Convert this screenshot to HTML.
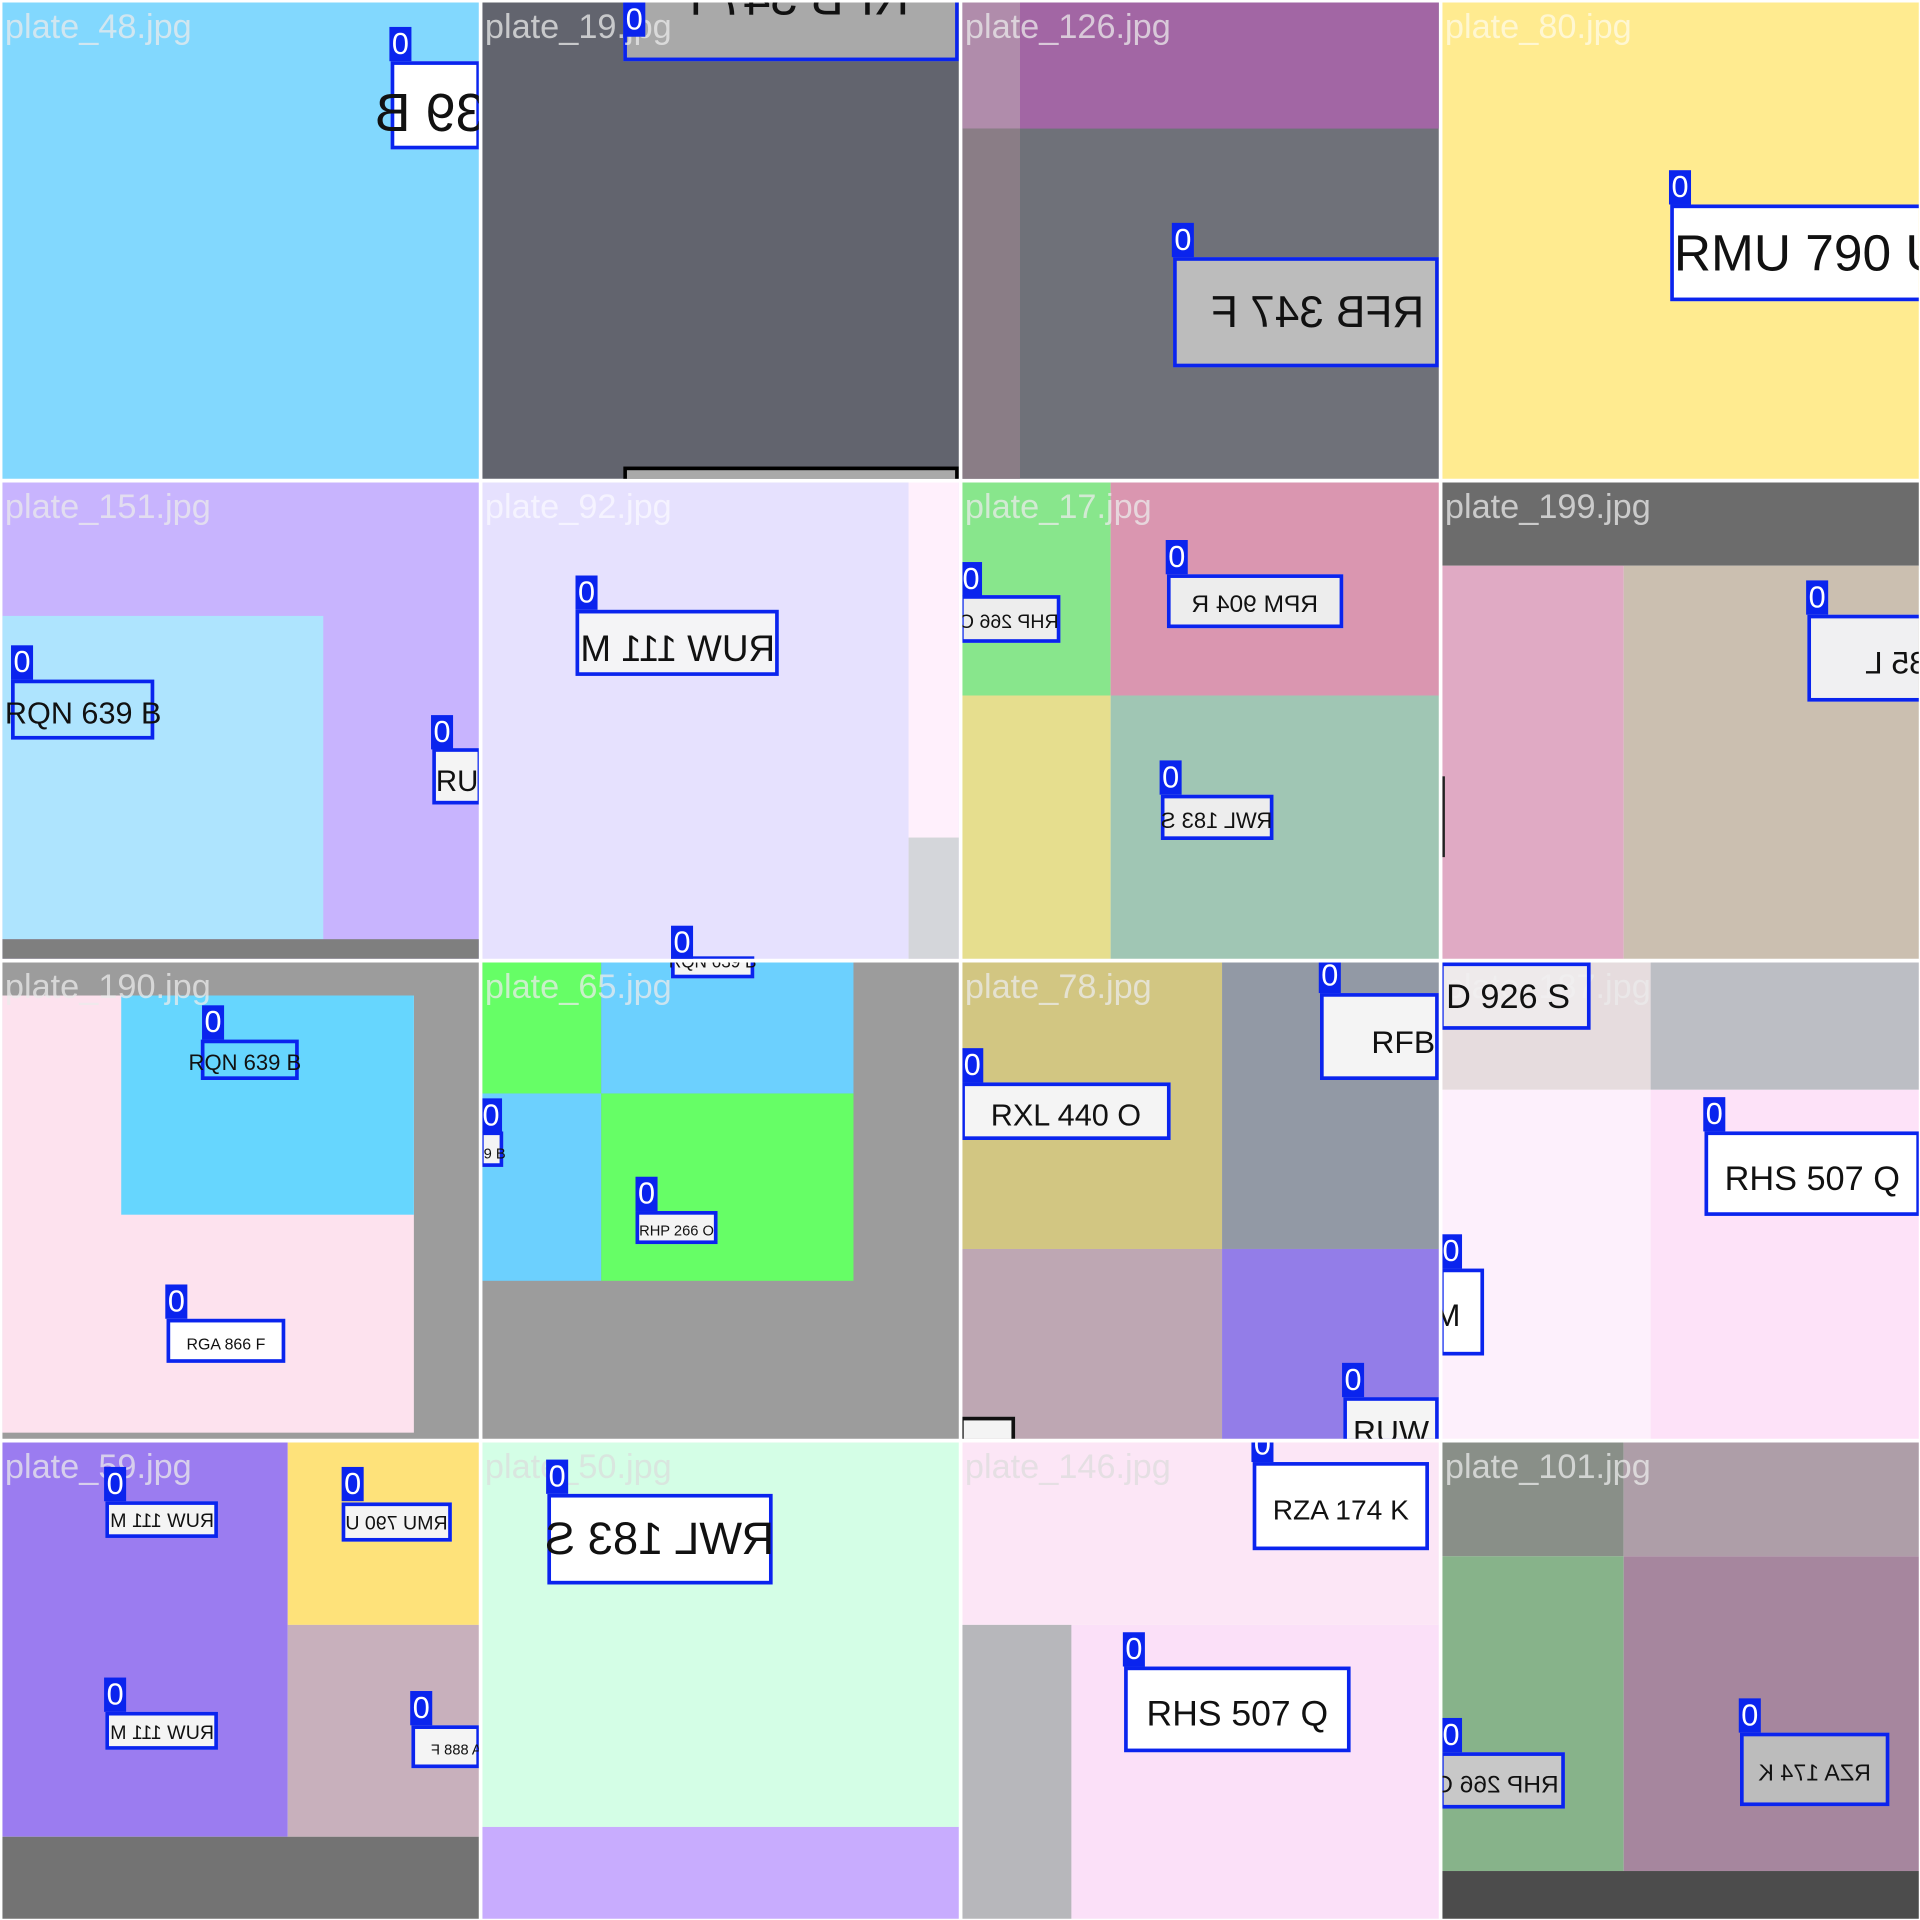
<!DOCTYPE html><html><head><meta charset="utf-8"><style>
html,body{margin:0;padding:0;background:#fff;}
#w{position:absolute;left:0;top:0;width:1568px;height:1568px;transform:scale(1.22449);transform-origin:0 0;background:#fff;font-family:"Liberation Sans",sans-serif;}
.t{position:absolute;width:389px;height:389px;overflow:hidden;}
.in{position:absolute;width:1568px;height:1568px;}
.r{position:absolute;}
.b{position:absolute;box-sizing:border-box;border:3px solid #0a24ee;background:#ededed;display:flex;align-items:center;justify-content:center;white-space:nowrap;color:#111;overflow:visible;}
.b span{display:inline-block;}
.m span{transform:scaleX(-1);}
.l{position:absolute;width:18px;height:28px;background:#0a24ee;color:#fff;font-size:25px;line-height:28px;text-align:center;}
.f{position:absolute;color:rgba(235,235,235,.75);font-size:28px;white-space:nowrap;}
</style></head><body><div id="w">

<!-- T1 -->
<div class="t" style="left:2px;top:2px"><div class="in" style="left:-2px;top:-2px">
<div class="r" style="left:0;top:0;width:400px;height:400px;background:#82d8fe"></div>
<div class="b m" style="left:319px;top:50px;width:73px;height:72px;background:#fff;font-size:44px;justify-content:flex-start"><span style="margin-left:-16px;margin-top:14px">639 B</span></div>
<div class="l" style="left:318px;top:22px">0</div>
<div class="f" style="left:4px;top:6px">plate_48.jpg</div>
</div></div>

<!-- T2 -->
<div class="t" style="left:394px;top:2px"><div class="in" style="left:-394px;top:-2px">
<div class="r" style="left:392px;top:0;width:400px;height:400px;background:#62646e"></div>
<div class="b m" style="left:509px;top:-4px;width:274px;height:54px;background:#a9a9a9;font-size:40px;align-items:flex-start"><span style="margin-top:-22px">RFB 347 F</span></div>
<div class="b" style="left:509px;top:381px;width:274px;height:40px;background:#a9a9a9;border:3px solid #000"></div>
<div class="f" style="left:396px;top:6px">plate_19.jpg</div>
<div class="l" style="left:509px;top:2px">0</div>
</div></div>

<!-- T3 -->
<div class="t" style="left:786px;top:2px"><div class="in" style="left:-786px;top:-2px">
<div class="r" style="left:784px;top:0;width:400px;height:400px;background:#6f7179"></div>
<div class="r" style="left:784px;top:0;width:400px;height:105px;background:#a266a4"></div>
<div class="r" style="left:784px;top:0;width:49px;height:105px;background:#b08cab"></div>
<div class="r" style="left:784px;top:105px;width:49px;height:300px;background:#8a7d86"></div>
<div class="b m" style="left:958px;top:210px;width:217px;height:90px;background:#bcbcbc;font-size:36px"><span style="margin-left:20px">RFB 347 F</span></div>
<div class="l" style="left:957px;top:182px">0</div>
<div class="f" style="left:788px;top:6px">plate_126.jpg</div>
</div></div>

<!-- T4 -->
<div class="t" style="left:1178px;top:2px"><div class="in" style="left:-1178px;top:-2px">
<div class="r" style="left:1176px;top:0;width:400px;height:400px;background:#ffeb90"></div>
<div class="b" style="left:1364px;top:167px;width:210px;height:79px;background:#fff;font-size:42px;justify-content:flex-start"><span>RMU 790 U</span></div>
<div class="l" style="left:1363px;top:139px">0</div>
<div class="f" style="left:1180px;top:6px;color:rgba(255,255,255,.6)">plate_80.jpg</div>
</div></div>

<!-- T5 -->
<div class="t" style="left:2px;top:394px"><div class="in" style="left:-2px;top:-394px">
<div class="r" style="left:0;top:392px;width:400px;height:400px;background:#c8b4fe"></div>
<div class="r" style="left:0;top:503px;width:264px;height:264px;background:#aee4fe"></div>
<div class="r" style="left:0;top:767px;width:400px;height:30px;background:#7f7f7f"></div>
<div class="b" style="left:9px;top:555px;width:117px;height:49px;background:transparent;font-size:25px;justify-content:flex-start"><span style="margin-left:-8px;margin-top:8px">RQN 639 B</span></div>
<div class="l" style="left:9px;top:527px">0</div>
<div class="b" style="left:353px;top:611px;width:40px;height:46px;background:#f4f4f4;font-size:24px;justify-content:flex-start"><span style="margin-top:10px">RU</span></div>
<div class="l" style="left:352px;top:584px">0</div>
<div class="f" style="left:4px;top:398px">plate_151.jpg</div>
</div></div>

<!-- T6 -->
<div class="t" style="left:394px;top:394px"><div class="in" style="left:-394px;top:-394px">
<div class="r" style="left:392px;top:392px;width:400px;height:400px;background:#e6e1fe"></div>
<div class="r" style="left:742px;top:392px;width:50px;height:400px;background:#fff0fc"></div>
<div class="r" style="left:742px;top:684px;width:50px;height:110px;background:#d4d6da"></div>
<div class="b m" style="left:470px;top:498px;width:166px;height:54px;background:#f4f4f6;font-size:30px"><span style="margin-top:12px">RUW 111 M</span></div>
<div class="l" style="left:470px;top:470px">0</div>
<div class="b" style="left:548px;top:781px;width:68px;height:20px;background:#f4f4f4;font-size:14px"><span>RQN 639 B</span></div>
<div class="l" style="left:548px;top:756px">0</div>
<div class="f" style="left:396px;top:398px;color:rgba(255,255,255,.6)">plate_92.jpg</div>
</div></div>

<!-- T7 -->
<div class="t" style="left:786px;top:394px"><div class="in" style="left:-786px;top:-394px">
<div class="r" style="left:784px;top:392px;width:123px;height:176px;background:#88e68c"></div>
<div class="r" style="left:907px;top:392px;width:280px;height:176px;background:#da96b0"></div>
<div class="r" style="left:784px;top:568px;width:123px;height:230px;background:#e6de8e"></div>
<div class="r" style="left:907px;top:568px;width:280px;height:230px;background:#a0c6b4"></div>
<div class="b m" style="left:784px;top:486px;width:82px;height:39px;font-size:16px;justify-content:flex-end"><span style="margin-right:-2px;margin-top:6px">RHP 266 O</span></div>
<div class="l" style="left:784px;top:459px">0</div>
<div class="b m" style="left:953px;top:469px;width:144px;height:44px;font-size:20px"><span style="margin-top:6px">RPM 904 R</span></div>
<div class="l" style="left:952px;top:441px">0</div>
<div class="b m" style="left:948px;top:649px;width:92px;height:37px;font-size:18px"><span style="margin-top:6px">RWL 183 S</span></div>
<div class="l" style="left:947px;top:621px">0</div>
<div class="f" style="left:788px;top:398px">plate_17.jpg</div>
</div></div>

<!-- T8 -->
<div class="t" style="left:1178px;top:394px"><div class="in" style="left:-1178px;top:-394px">
<div class="r" style="left:1176px;top:392px;width:400px;height:70px;background:#6c6c6c"></div>
<div class="r" style="left:1176px;top:462px;width:150px;height:330px;background:#e0aac4"></div>
<div class="r" style="left:1326px;top:462px;width:250px;height:330px;background:#cbbfb0"></div>
<div class="r" style="left:1177px;top:634px;width:3px;height:66px;background:#222"></div>
<div class="b m" style="left:1476px;top:502px;width:95px;height:71px;background:#f0f0f2;font-size:26px;justify-content:flex-start"><span style="margin-left:44px;margin-top:8px">85 L</span></div>
<div class="l" style="left:1475px;top:474px">0</div>
<div class="f" style="left:1180px;top:398px">plate_199.jpg</div>
</div></div>

<!-- T9 -->
<div class="t" style="left:2px;top:786px"><div class="in" style="left:-2px;top:-786px">
<div class="r" style="left:0;top:784px;width:400px;height:400px;background:#9c9c9c"></div>
<div class="r" style="left:0;top:813px;width:338px;height:357px;background:#fde2ee"></div>
<div class="r" style="left:99px;top:813px;width:239px;height:179px;background:#66d6fe"></div>
<div class="b" style="left:164px;top:849px;width:80px;height:33px;background:transparent;font-size:18px"><span style="margin-left:-8px;margin-top:6px">RQN 639 B</span></div>
<div class="l" style="left:165px;top:821px">0</div>
<div class="b" style="left:136px;top:1077px;width:97px;height:36px;background:#fff;font-size:13px"><span style="margin-top:4px">RGA 866 F</span></div>
<div class="l" style="left:135px;top:1049px">0</div>
<div class="f" style="left:4px;top:790px">plate_190.jpg</div>
</div></div>

<!-- T10 -->
<div class="t" style="left:394px;top:786px"><div class="in" style="left:-394px;top:-786px">
<div class="r" style="left:392px;top:784px;width:400px;height:400px;background:#9c9c9c"></div>
<div class="r" style="left:392px;top:784px;width:99px;height:109px;background:#66fe66"></div>
<div class="r" style="left:491px;top:784px;width:206px;height:109px;background:#6cd0fe"></div>
<div class="r" style="left:392px;top:893px;width:99px;height:153px;background:#6cd0fe"></div>
<div class="r" style="left:491px;top:893px;width:206px;height:153px;background:#66fe66"></div>
<div class="b" style="left:548px;top:770px;width:68px;height:29px;background:#f4f4f4;font-size:14px"><span>RQN 639 B</span></div>
<div class="b" style="left:392px;top:924px;width:19px;height:29px;background:#f4f4f4;font-size:12px;justify-content:flex-start"><span style="margin-top:6px">9 B</span></div>
<div class="l" style="left:392px;top:897px">0</div>
<div class="b" style="left:519px;top:989px;width:67px;height:27px;background:#f4f4f4;font-size:12px"><span style="margin-top:4px">RHP 266 O</span></div>
<div class="l" style="left:519px;top:961px">0</div>
<div class="f" style="left:396px;top:790px">plate_65.jpg</div>
</div></div>

<!-- T11 -->
<div class="t" style="left:786px;top:786px"><div class="in" style="left:-786px;top:-786px">
<div class="r" style="left:784px;top:784px;width:214px;height:236px;background:#d2c682"></div>
<div class="r" style="left:998px;top:784px;width:190px;height:236px;background:#9299a5"></div>
<div class="r" style="left:784px;top:1020px;width:214px;height:170px;background:#bea7b3"></div>
<div class="r" style="left:998px;top:1020px;width:190px;height:170px;background:#937de8"></div>
<div class="b" style="left:1078px;top:811px;width:97px;height:71px;background:#f4f4f4;font-size:26px;justify-content:flex-end"><span style="margin-top:10px">RFB</span></div>
<div class="l" style="left:1077px;top:783px">0</div>
<div class="b" style="left:785px;top:884px;width:171px;height:47px;background:#f4f4f4;font-size:25px"><span style="margin-top:8px">RXL 440 O</span></div>
<div class="l" style="left:785px;top:856px">0</div>
<div class="b" style="left:1097px;top:1141px;width:78px;height:40px;background:#f4f4f4;font-size:26px;align-items:flex-start"><span style="margin-top:10px">RUW</span></div>
<div class="l" style="left:1096px;top:1113px">0</div>
<div class="b" style="left:784px;top:1157px;width:45px;height:30px;background:#f4f4f4;border-color:#111"></div>
<div class="f" style="left:788px;top:790px">plate_78.jpg</div>
</div></div>

<!-- T12 -->
<div class="t" style="left:1178px;top:786px"><div class="in" style="left:-1178px;top:-786px">
<div class="r" style="left:1176px;top:784px;width:172px;height:106px;background:#e6dcde"></div>
<div class="r" style="left:1348px;top:784px;width:230px;height:106px;background:#bcbec4"></div>
<div class="r" style="left:1176px;top:890px;width:172px;height:300px;background:#fdf0fc"></div>
<div class="r" style="left:1348px;top:890px;width:230px;height:300px;background:#fde2f8"></div>
<div class="f" style="left:1180px;top:790px">plate_187.jpg</div>
<div class="b" style="left:1176px;top:786px;width:123px;height:55px;background:rgba(244,244,244,.6);font-size:28px;justify-content:flex-start"><span style="margin-left:2px">D 926 S</span></div>
<div class="b" style="left:1392px;top:924px;width:176px;height:69px;background:#fff;font-size:28px"><span style="margin-top:8px">RHS 507 Q</span></div>
<div class="l" style="left:1391px;top:896px">0</div>
<div class="b" style="left:1176px;top:1036px;width:36px;height:71px;background:#fff;font-size:26px;justify-content:flex-start"><span style="margin-left:-8px;margin-top:6px">M</span></div>
<div class="l" style="left:1176px;top:1008px">0</div>
</div></div>

<!-- T13 -->
<div class="t" style="left:2px;top:1178px"><div class="in" style="left:-2px;top:-1178px">
<div class="r" style="left:0;top:1176px;width:235px;height:324px;background:#9b7cf0"></div>
<div class="r" style="left:235px;top:1176px;width:160px;height:151px;background:#fee27a"></div>
<div class="r" style="left:235px;top:1327px;width:160px;height:173px;background:#c8b0bc"></div>
<div class="r" style="left:0;top:1500px;width:400px;height:70px;background:#737373"></div>
<div class="f" style="left:4px;top:1182px">plate_59.jpg</div>
<div class="b m" style="left:86px;top:1226px;width:92px;height:30px;background:#f4f4f4;font-size:16px"><span style="margin-top:4px">RUW 111 M</span></div>
<div class="l" style="left:85px;top:1198px">0</div>
<div class="b m" style="left:279px;top:1227px;width:90px;height:32px;background:#f4f4f4;font-size:16px"><span style="margin-top:4px">RMU 790 U</span></div>
<div class="l" style="left:279px;top:1198px">0</div>
<div class="b m" style="left:86px;top:1398px;width:92px;height:31px;background:#f4f4f4;font-size:16px"><span style="margin-top:4px">RUW 111 M</span></div>
<div class="l" style="left:85px;top:1370px">0</div>
<div class="b m" style="left:336px;top:1409px;width:56px;height:35px;background:#f4f4f4;font-size:12px;justify-content:flex-end"><span style="margin-right:-22px;margin-top:4px">RGA 888 F</span></div>
<div class="l" style="left:335px;top:1381px">0</div>
</div></div>

<!-- T14 -->
<div class="t" style="left:394px;top:1178px"><div class="in" style="left:-394px;top:-1178px">
<div class="r" style="left:392px;top:1176px;width:400px;height:316px;background:#d4fee6"></div>
<div class="r" style="left:392px;top:1492px;width:400px;height:80px;background:#c8acfe"></div>
<div class="f" style="left:396px;top:1182px;color:rgba(220,220,220,.7)">plate_50.jpg</div>
<div class="b m" style="left:447px;top:1220px;width:184px;height:74px;background:#fff;font-size:37px"><span>RWL 183 S</span></div>
<div class="l" style="left:446px;top:1192px">0</div>
</div></div>

<!-- T15 -->
<div class="t" style="left:786px;top:1178px"><div class="in" style="left:-786px;top:-1178px">
<div class="r" style="left:784px;top:1176px;width:400px;height:151px;background:#fce6f6"></div>
<div class="r" style="left:784px;top:1327px;width:91px;height:250px;background:#b7b7bb"></div>
<div class="r" style="left:875px;top:1327px;width:310px;height:250px;background:#fbe0f8"></div>
<div class="f" style="left:788px;top:1182px;color:rgba(220,220,220,.7)">plate_146.jpg</div>
<div class="b" style="left:1023px;top:1194px;width:144px;height:72px;background:#fff;font-size:23px"><span style="margin-top:6px">RZA 174 K</span></div>
<div class="l" style="left:1022px;top:1166px">0</div>
<div class="b" style="left:918px;top:1361px;width:185px;height:70px;background:#fff;font-size:29px"><span style="margin-top:8px">RHS 507 Q</span></div>
<div class="l" style="left:917px;top:1333px">0</div>
</div></div>

<!-- T16 -->
<div class="t" style="left:1178px;top:1178px"><div class="in" style="left:-1178px;top:-1178px">
<div class="r" style="left:1176px;top:1176px;width:150px;height:95px;background:#898f88"></div>
<div class="r" style="left:1326px;top:1176px;width:250px;height:95px;background:#ae9ea8"></div>
<div class="r" style="left:1176px;top:1271px;width:150px;height:257px;background:#87b38a"></div>
<div class="r" style="left:1326px;top:1271px;width:250px;height:257px;background:#a6869e"></div>
<div class="r" style="left:1176px;top:1528px;width:400px;height:45px;background:#4c4c4c"></div>
<div class="f" style="left:1180px;top:1182px">plate_101.jpg</div>
<div class="b m" style="left:1176px;top:1431px;width:102px;height:46px;background:#c8c8c8;font-size:20px;justify-content:flex-end"><span style="margin-right:2px;margin-top:8px">RHP 266 O</span></div>
<div class="l" style="left:1176px;top:1403px">0</div>
<div class="b m" style="left:1421px;top:1415px;width:122px;height:60px;background:#bcbcbc;font-size:19px"><span style="margin-top:8px">RZA 174 K</span></div>
<div class="l" style="left:1420px;top:1387px">0</div>
</div></div>

</div></body></html>
